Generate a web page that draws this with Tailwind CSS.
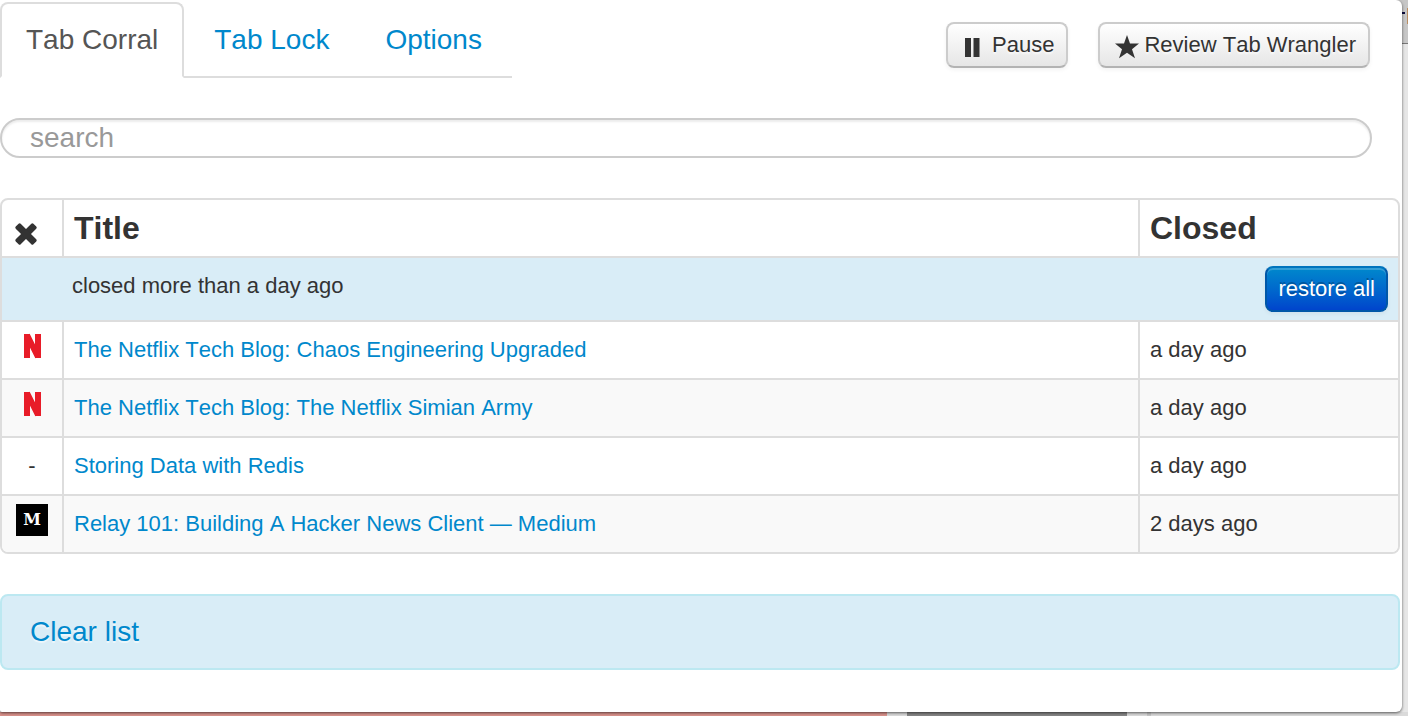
<!DOCTYPE html>
<html lang="en">
<head>
    <meta charset="UTF-8">
    <meta name="viewport" content="width=device-width, initial-scale=1.0">
    <title>Tab Wrangler</title>
    <script src="https://cdn.jsdelivr.net/npm/@tailwindcss/browser@4"></script>
</head>
<body class="relative min-h-screen flex flex-col overflow-hidden bg-[#e6e6e6] font-['Helvetica_Neue','Liberation_Sans',Arial,sans-serif] [font-kerning:none] text-[22px] leading-[40px] text-[#333]">

    <!-- browser window behind the popup -->
    <div class="absolute top-0 right-0 w-8 h-11 bg-[#c6c6c6] border-b border-[#777]">
        <span class="absolute right-[3px] top-3 w-[3px] h-[2px] bg-[#0a0a3c]"></span>
        <span class="absolute right-0 top-2 w-px h-4 bg-[#b98d62]"></span>
    </div>

    <div class="relative z-10 grow mr-[6px] pr-[2px] pt-[2px] bg-white rounded-r-md rounded-bl-xs shadow-[0_1px_3px_rgba(0,0,0,0.6)]">
        <header class="flex items-start justify-between pr-[30px]">
            <ul class="flex gap-1 pr-1 border-b-2 border-[#ddd] text-[28px]">
                <li class="-mb-[2px]"><a href="#corral" class="block px-6 py-4 border-2 border-[#ddd] border-b-white rounded-t-lg bg-white text-[#555]">Tab Corral</a></li>
                <li class="-mb-[2px]"><a href="#lock" class="block px-6 py-4 border-2 border-transparent text-[#08c]">Tab Lock</a></li>
                <li class="-mb-[2px]"><a href="#options" class="block px-6 py-4 border-2 border-transparent text-[#08c]">Options</a></li>
            </ul>
            <div class="flex gap-[30px] pt-5">
                <button type="button" class="flex items-center h-[46px] px-3 gap-1 border-2 border-[#ccc] border-b-[#b3b3b3] rounded-lg bg-linear-to-b from-white to-[#e6e6e6] shadow-[0_2px_4px_rgba(0,0,0,0.05)] [text-shadow:0_2px_2px_rgba(255,255,255,0.75)]">
                    <svg class="w-7 h-7 mt-1" viewBox="0 0 28 28" fill="#333"><path d="M5 5h6v19H5zM13.500 5h6v19h-6z"/></svg>
                    Pause
                </button>
                <button type="button" class="flex items-center h-[46px] px-3 gap-1 border-2 border-[#ccc] border-b-[#b3b3b3] rounded-lg bg-linear-to-b from-white to-[#e6e6e6] shadow-[0_2px_4px_rgba(0,0,0,0.05)] [text-shadow:0_2px_2px_rgba(255,255,255,0.75)]">
                    <svg class="w-7 h-7 mt-1" viewBox="0 0 28 28" fill="#333"><path d="M15 2l3 8.600h9l-7 5.600 3 9-8-5.500-8 5.500 3-9-7-5.600h9z"/></svg>
                    Review Tab Wrangler
                </button>
            </div>
        </header>

        <div class="mt-10 pr-[28px]">
            <input type="search" aria-label="Search tabs" placeholder="search" class="block w-full h-10 px-7 border-2 border-[#ccc] rounded-full bg-white text-[28px] leading-9 placeholder:text-[#999] shadow-[inset_0_2px_2px_rgba(0,0,0,0.075)]">
        </div>

        <table class="w-full mt-10 table-fixed border-separate border-spacing-0 border-2 border-[#ddd] rounded-lg overflow-hidden">
            <colgroup>
                <col class="w-[60px]">
                <col>
                <col class="w-[260px]">
            </colgroup>
            <thead>
                <tr class="text-left text-[32px]">
                    <th class="px-[10px] py-2 align-bottom">
                        <button type="button" aria-label="Remove all" class="block w-7 h-7">
                            <svg class="w-7 h-7" viewBox="0 0 28 28" fill="#333">
                                <g transform="rotate(45 14 14)">
                                    <rect x="10.500" y="1.500" width="7" height="25" rx="1.500"/>
                                    <rect x="1.500" y="10.500" width="25" height="7" rx="1.500"/>
                                </g>
                            </svg>
                        </button>
                    </th>
                    <th class="px-[10px] py-2 border-l-2 border-[#ddd] font-bold">Title</th>
                    <th class="px-[10px] py-2 border-l-2 border-[#ddd] font-bold">Closed</th>
                </tr>
            </thead>
            <tbody class="align-top">
                <tr class="bg-[#d9edf7]">
                    <td class="border-t-2 border-[#ddd]"></td>
                    <td class="px-[10px] py-2 border-t-2 border-[#ddd]">closed more than a day ago</td>
                    <td class="px-[10px] py-2 border-t-2 border-[#ddd]">
                        <button type="button" class="block ml-auto h-[46px] px-[11px] border-2 border-[#0057a8] border-t-[#0074bd] rounded-lg bg-linear-to-b from-[#08c] to-[#04c] text-white shadow-[inset_0_2px_0_rgba(255,255,255,0.2),0_2px_4px_rgba(0,0,0,0.05)] [text-shadow:0_-2px_0_rgba(0,0,0,0.25)]">restore all</button>
                    </td>
                </tr>
                <tr>
                    <td class="px-[10px] py-2 border-t-2 border-[#ddd]">
                        <svg class="w-8 h-8 mx-auto" viewBox="0 0 32 32" stroke="#e81c28" stroke-width="6"><path d="M11 4v24M22 4v24M11 5l11 22"/></svg>
                    </td>
                    <td class="px-[10px] py-2 border-t-2 border-l-2 border-[#ddd]"><a href="#" class="text-[#08c]">The Netflix Tech Blog: Chaos Engineering Upgraded</a></td>
                    <td class="px-[10px] py-2 border-t-2 border-l-2 border-[#ddd]">a day ago</td>
                </tr>
                <tr class="bg-[#f9f9f9]">
                    <td class="px-[10px] py-2 border-t-2 border-[#ddd]">
                        <svg class="w-8 h-8 mx-auto" viewBox="0 0 32 32" stroke="#e81c28" stroke-width="6"><path d="M11 4v24M22 4v24M11 5l11 22"/></svg>
                    </td>
                    <td class="px-[10px] py-2 border-t-2 border-l-2 border-[#ddd]"><a href="#" class="text-[#08c]">The Netflix Tech Blog: The Netflix Simian Army</a></td>
                    <td class="px-[10px] py-2 border-t-2 border-l-2 border-[#ddd]">a day ago</td>
                </tr>
                <tr>
                    <td class="px-[10px] py-2 border-t-2 border-[#ddd] text-center">-</td>
                    <td class="px-[10px] py-2 border-t-2 border-l-2 border-[#ddd]"><a href="#" class="text-[#08c]">Storing Data with Redis</a></td>
                    <td class="px-[10px] py-2 border-t-2 border-l-2 border-[#ddd]">a day ago</td>
                </tr>
                <tr class="bg-[#f9f9f9]">
                    <td class="px-[10px] py-2 border-t-2 border-[#ddd]">
                        <div class="w-8 h-8 mx-auto bg-black text-white text-center text-base leading-8 font-bold font-['DejaVu_Serif',serif]">M</div>
                    </td>
                    <td class="px-[10px] py-2 border-t-2 border-l-2 border-[#ddd]"><a href="#" class="text-[#08c]">Relay 101: Building A Hacker News Client — Medium</a></td>
                    <td class="px-[10px] py-2 border-t-2 border-l-2 border-[#ddd]">2 days ago</td>
                </tr>
            </tbody>
        </table>

        <div class="mt-10 px-7 py-4 border-2 border-[#bce8f1] rounded-lg bg-[#d9edf7] text-[28px] [text-shadow:0_2px_0_rgba(255,255,255,0.5)]">
            <a href="#" class="text-[#08c]">Clear list</a>
        </div>
    </div>

    <!-- page content showing under the popup -->
    <div class="flex h-1 bg-[#dadada]">
        <div class="w-[63%] bg-[#d9918b]"></div>
        <div class="w-[220px] ml-5 bg-[#858585]"></div>
        <div class="w-1 ml-5 bg-[#c4c4c4]"></div>
    </div>

</body>
</html>
